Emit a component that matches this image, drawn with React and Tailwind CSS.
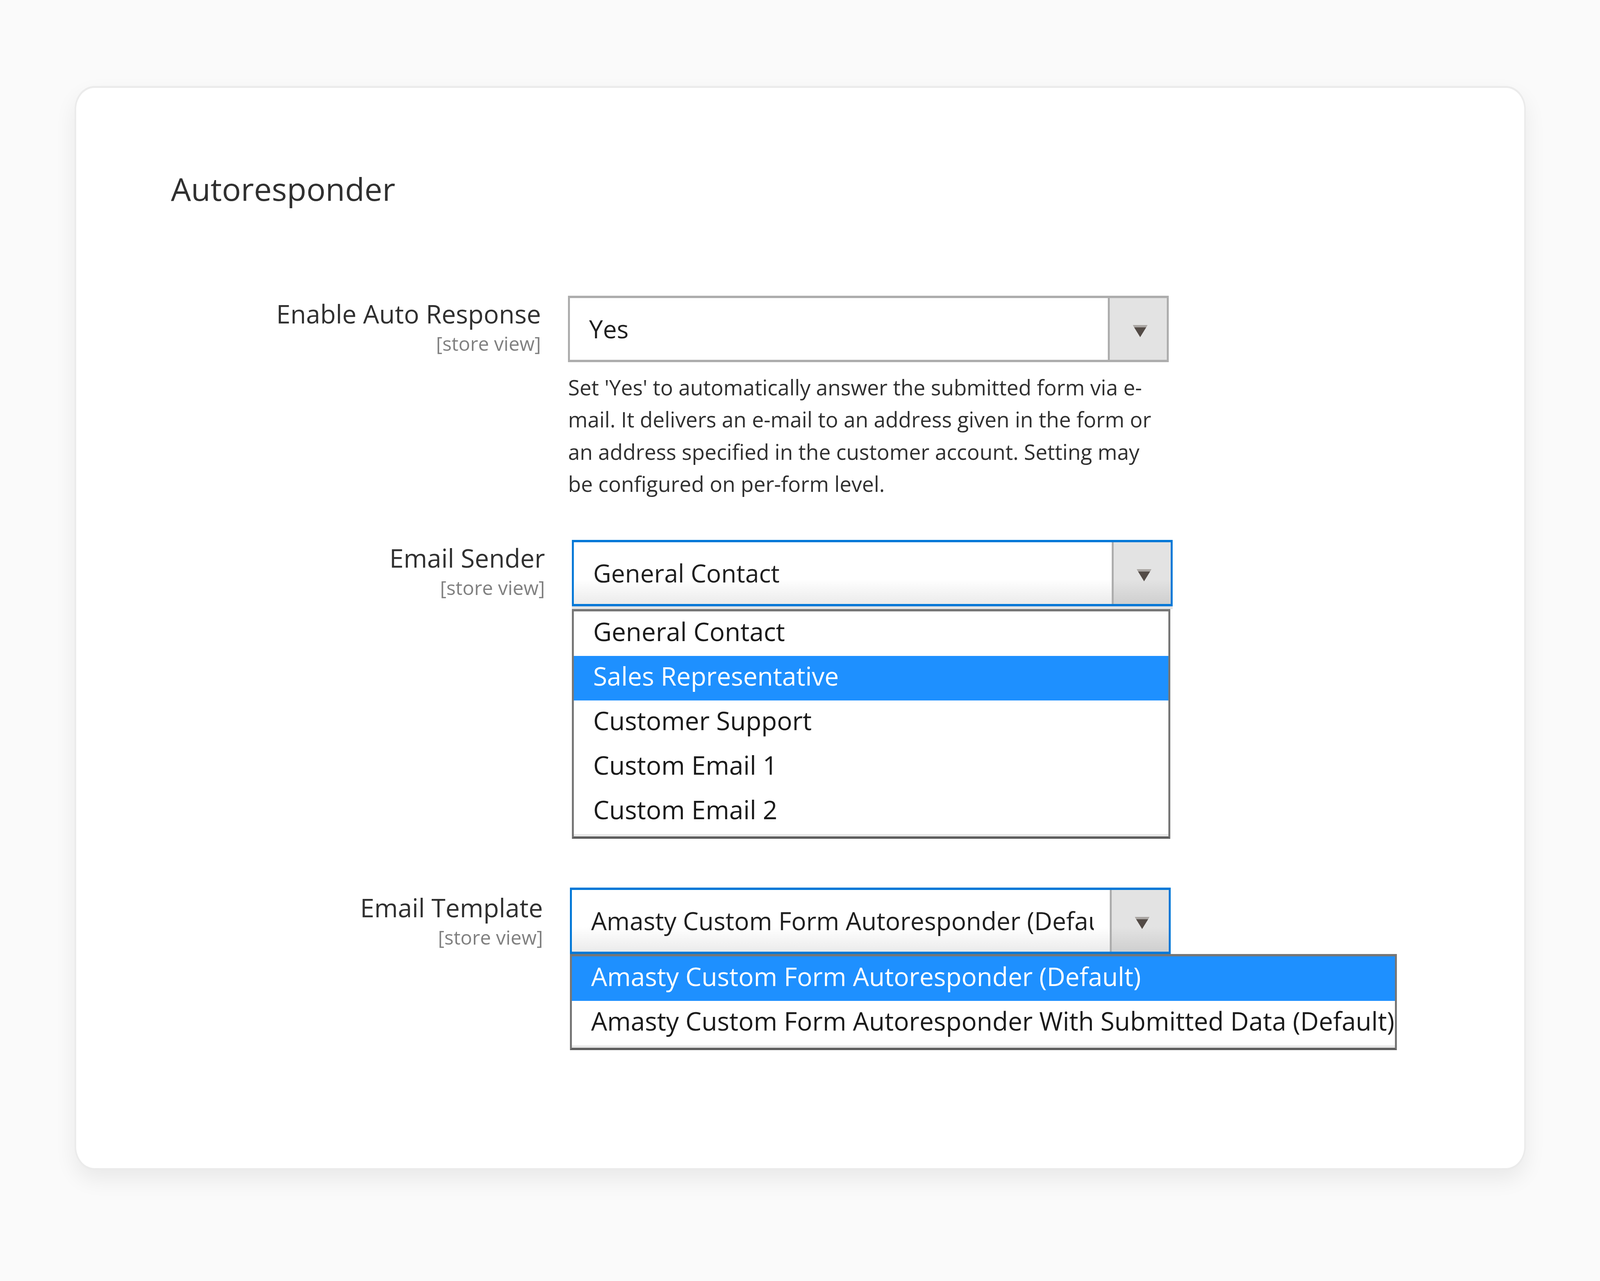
const font = "font-['Open_Sans',sans-serif]";

function Arrow() {
  return (
    <svg
      width="37.7"
      height="32"
      viewBox="0 0 44 32"
      preserveAspectRatio="none"
      className="ml-[10.3px] mt-[11px]"
    >
      <polygon points="0,0 44,0 40,6 4,6" fill="#a9a5a2" />
      <polygon points="4,6 40,6 22,31" fill="#534b46" />
    </svg>
  );
}

function Select({ value, focused }) {
  return (
    <div
      className={`flex h-[170px] w-[1538px] border-x-[5.14px] border-y-[6px] ${
        focused ? "border-[#0078d7]" : "border-[#adadad]"
      }`}
    >
      <div
        className={`flex min-w-0 flex-1 items-center pl-[48.9px] pr-[41px] ${
          focused ? "bg-linear-to-b from-white from-60% to-[#ebebeb]" : "bg-white"
        }`}
      >
        <div className="overflow-hidden whitespace-nowrap text-[63.4px] leading-[100px] text-[#1f1f1f]">
          {value}
        </div>
      </div>
      <div
        className={`flex w-[151.7px] shrink-0 items-center justify-center border-l-[5.14px] border-[#adadad] ${
          focused ? "bg-linear-to-b from-[#e3e3e3] from-60% to-[#cfcfcf]" : "bg-[#e3e3e3]"
        }`}
      >
        <Arrow />
      </div>
    </div>
  );
}

function Options({ items, selected, wide }) {
  return (
    <div
      className={`border-x-[5.14px] border-y-[6px] border-[#767676] border-b-[#5e5e5e] bg-white ${
        wide ? "w-[2116.6px]" : "w-[1532px]"
      }`}
    >
      {items.map((it, i) => (
        <div
          key={it}
          className={`h-[114px] whitespace-nowrap pl-[48.9px] text-[65.2px] leading-[102px] ${
            i === selected ? "bg-[#1e90ff] text-white" : "text-[#1a1a1a]"
          }`}
        >
          {it}
        </div>
      ))}
      <div className="h-[6px] bg-[#e8e8e8]" />
    </div>
  );
}

function Row({ label, className = "", labelClass = "", children }) {
  return (
    <div className={`flex ${className}`}>
      <div className={`w-[947.3px] shrink-0 text-right ${labelClass}`}>
        <div className="text-[65.2px] leading-[92px] text-[#303030]">{label}</div>
        <div className="text-[49.7px] leading-[61px] text-[#808080]">[store view]</div>
      </div>
      <div className="ml-[69.4px]">{children}</div>
    </div>
  );
}

const help = [
  "Set 'Yes' to automatically answer the submitted form via e-",
  "mail. It delivers an e-mail to an address given in the form or",
  "an address specified in the customer account. Setting may",
  "be configured on per-form level.",
];

export default function App() {
  return (
    <div className={`min-h-screen bg-[#fafafa] pt-[220px] ${font}`}>
      <div className="mx-auto h-[2775px] w-[3715px] rounded-[51px/60px] border-x-[4.3px] border-y-[5px] border-[#ebebeb] bg-white pl-[243px] pt-[193px] shadow-[0_24px_55px_rgba(0,0,0,0.07)]">
        <h2 className="text-[81.4px] font-normal leading-[130px] text-[#303030]">Autoresponder</h2>

        <Row label="Enable Auto Response" className="mt-[209px]">
          <Select value="Yes" />
          <div className="mt-[23px] text-[54px] leading-[82.3px] text-[#303030]">
            {help.map((l) => (
              <div key={l} className="whitespace-nowrap">
                {l}
              </div>
            ))}
          </div>
        </Row>

        <Row label="Email Sender" className="ml-[10.3px] mt-[103px]">
          <Select value="General Contact" focused />
          <div className="h-[7px] w-[1538px] bg-[#e4e4e4]" />
          <Options
            items={[
              "General Contact",
              "Sales Representative",
              "Customer Support",
              "Custom Email 1",
              "Custom Email 2",
            ]}
            selected={1}
          />
        </Row>

        <Row label="Email Template" className="ml-[5.1px] mt-[125px]" labelClass="mt-[5px]">
          <Select value="Amasty Custom Form Autoresponder (Default)" focused />
          <Options
            wide
            items={[
              "Amasty Custom Form Autoresponder (Default)",
              "Amasty Custom Form Autoresponder With Submitted Data (Default)",
            ]}
            selected={0}
          />
        </Row>
      </div>
    </div>
  );
}
